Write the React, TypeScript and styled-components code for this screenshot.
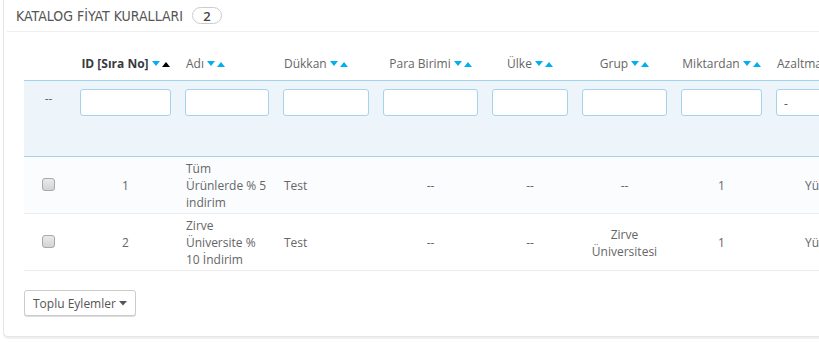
import React from "react";
import styled, { createGlobalStyle } from "styled-components";

const GlobalStyle = createGlobalStyle`
  html, body {
    margin: 0;
    padding: 0;
    background: #fff;
    overflow: hidden;
  }
  body {
    font-family: "Open Sans", "Liberation Sans", sans-serif;
    font-size: 12px;
    color: #666;
  }
`;

const Page = styled.div`
  width: 819px;
  height: 342px;
  overflow: hidden;
  padding-left: 3px;
  box-sizing: border-box;
`;

const Panel = styled.div`
  width: 900px;
  box-sizing: border-box;
  border: 1px solid #e6e6e6;
  border-top: none;
  border-radius: 0 0 5px 5px;
  box-shadow: 0 2px 0 rgba(0, 0, 0, 0.06);
  padding: 0 20px 20px 20px;
  background: #fff;
`;

const Heading = styled.div`
  display: flex;
  align-items: center;
  gap: 9px;
  height: 31px;
  margin: 0 -20px 15px -17px;
  padding-left: 9px;
  border-bottom: 1px solid #eee;
  font-family: "Liberation Sans Narrow", "DejaVu Sans Condensed", "Open Sans", sans-serif;
  font-size: 14px;
  color: #555;
  text-transform: uppercase;
`;

const Badge = styled.span`
  display: inline-flex;
  align-items: center;
  justify-content: center;
  width: 28px;
  height: 15px;
  border: 1px solid #ccc;
  border-radius: 10px;
  font-family: "Open Sans", sans-serif;
  font-weight: 600;
  font-size: 13px;
  color: #444;
`;

const Table = styled.table`
  border-collapse: collapse;
  table-layout: fixed;
  width: 869px;
`;

const HeadCell = styled.th<{ $align?: string; $active?: boolean }>`
  height: 33px;
  padding: 0 8px;
  text-align: ${(p) => p.$align || "center"};
  vertical-align: middle;
  font-weight: ${(p) => (p.$active ? 700 : 400)};
  color: ${(p) => (p.$active ? "#363a41" : "#666")};
  white-space: nowrap;
`;

const FilterRow = styled.tr`
  background: #edf5fb;
  border-top: 1px solid #a0d3ec;
  border-bottom: 1px solid #a0d3ec;
  height: 76px;
`;

const FilterCell = styled.td`
  padding: 8px 7px 0 7px;
  vertical-align: top;
  text-align: center;
`;

const Dashes = styled.span`
  display: block;
  padding-top: 1px;
  line-height: 18px;
  color: #666;
`;

const FilterInput = styled.input`
  display: block;
  width: 100%;
  height: 27px;
  box-sizing: border-box;
  border: 1px solid #a6d3ec;
  border-radius: 3px;
  background: #fff;
  font-family: "Open Sans", sans-serif;
  font-size: 12px;
  color: #555;
  padding: 0 7px;
  outline: none;
`;

const FilterSelect = styled.div`
  height: 27px;
  box-sizing: border-box;
  border: 1px solid #a6d3ec;
  border-radius: 3px;
  background: #fff;
  padding: 0 7px;
  line-height: 27px;
  text-align: left;
  color: #555;
`;

const DataRow = styled.tr<{ $odd?: boolean }>`
  height: 57px;
  background: ${(p) => (p.$odd ? "#fafcfe" : "#fff")};
  border-bottom: 1px solid #e8ecef;
`;

const DataCell = styled.td<{ $align?: string }>`
  padding: 1px 8px 0 8px;
  line-height: 17px;
  text-align: ${(p) => p.$align || "center"};
  vertical-align: middle;
  color: #666;
`;

const Check = styled.span`
  display: inline-block;
  width: 11px;
  height: 11px;
  border: 1px solid #a9a9a9;
  border-radius: 3px;
  background: linear-gradient(#eaeaea, #d4d4d4);
  margin-top: -5px;
  vertical-align: middle;
`;

const Arrows = styled.span`
  display: inline-flex;
  align-items: center;
  gap: 2px;
  margin-left: 3px;
  vertical-align: 1px;
`;

const Footer = styled.div`
  padding-top: 19px;
`;

const BulkButton = styled.button`
  display: inline-flex;
  align-items: center;
  gap: 3px;
  height: 26px;
  padding: 0 8px;
  border: 1px solid #ccc;
  border-radius: 3px;
  background: #fff;
  box-shadow: 0 1px 0 #ddd;
  font-family: "Open Sans", sans-serif;
  font-size: 12px;
  color: #555;
`;

const Tri = ({ up, color }: { up?: boolean; color: string }) => (
  <svg width="8" height="6" viewBox="0 0 8 6">
    <polygon points={up ? "0,6 8,6 4,1" : "0,0 8,0 4,5"} fill={color} />
  </svg>
);

const Sort = ({ active }: { active?: boolean }) => (
  <Arrows>
    <Tri color="#00aff0" />
    <Tri up color={active ? "#000" : "#00aff0"} />
  </Arrows>
);

const columns = [
  { title: "ID [Sıra No]", width: 105, active: true },
  { title: "Adı", width: 98, align: "left" },
  { title: "Dükkan", width: 100, align: "left" },
  { title: "Para Birimi", width: 109 },
  { title: "Ülke", width: 90 },
  { title: "Grup", width: 99 },
  { title: "Miktardan", width: 95 },
  { title: "Azaltma türü", width: 106, align: "left", select: true },
];

const rows = [
  { id: 1, name: "Tüm Ürünlerde % 5 indirim", shop: "Test", cur: "--", country: "--", group: "--", qty: "1", type: "Yüzde" },
  { id: 2, name: "Zirve Üniversite % 10 İndirim", shop: "Test", cur: "--", country: "--", group: "Zirve Üniversitesi", qty: "1", type: "Yüzde" },
];

const App: React.FC = () => {
  return (
    <Page>
      <GlobalStyle />
      <Panel>
        <Heading>
          Katalog Fİyat Kuralları
          <Badge>2</Badge>
        </Heading>
        <Table>
          <colgroup>
            <col style={{ width: 49 }} />
            {columns.map((c) => (
              <col key={c.title} style={{ width: c.width }} />
            ))}
            <col style={{ width: 117 }} />
          </colgroup>
          <thead>
            <tr>
              <HeadCell />
              {columns.map((c) => (
                <HeadCell key={c.title} $align={c.align} $active={c.active}>
                  {c.title}
                  <Sort active={c.active} />
                </HeadCell>
              ))}
              <HeadCell />
            </tr>
            <FilterRow>
              <FilterCell>
                <Dashes>--</Dashes>
              </FilterCell>
              {columns.map((c) => (
                <FilterCell key={c.title}>
                  {c.select ? <FilterSelect>-</FilterSelect> : <FilterInput type="text" />}
                </FilterCell>
              ))}
              <FilterCell />
            </FilterRow>
          </thead>
          <tbody>
            {rows.map((r, i) => (
              <DataRow key={r.id} $odd={i % 2 === 0}>
                <DataCell>
                  <Check />
                </DataCell>
                <DataCell>{r.id}</DataCell>
                <DataCell $align="left">{r.name}</DataCell>
                <DataCell $align="left">{r.shop}</DataCell>
                <DataCell>{r.cur}</DataCell>
                <DataCell>{r.country}</DataCell>
                <DataCell>{r.group}</DataCell>
                <DataCell>{r.qty}</DataCell>
                <DataCell>{r.type}</DataCell>
                <DataCell />
              </DataRow>
            ))}
          </tbody>
        </Table>
        <Footer>
          <BulkButton>
            Toplu Eylemler
            <svg width="8" height="5" viewBox="0 0 8 5">
              <polygon points="0,0 8,0 4,4.5" fill="#555" />
            </svg>
          </BulkButton>
        </Footer>
      </Panel>
    </Page>
  );
};

export default App;
